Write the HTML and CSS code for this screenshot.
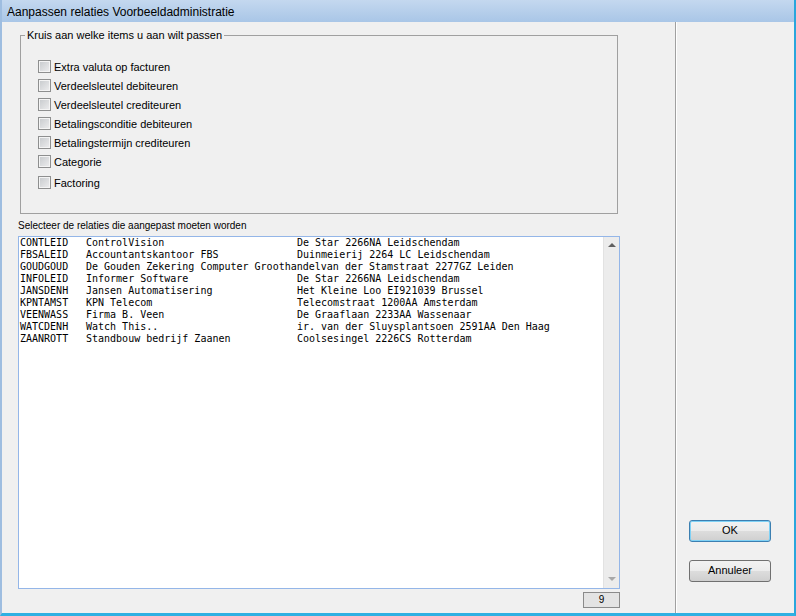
FILE: index.html
```html
<!DOCTYPE html>
<html lang="nl">

<head>
    <meta charset="UTF-8">
    <meta name="viewport" content="width=device-width, initial-scale=1.0">
    <title>Aanpassen relaties Voorbeeldadministratie</title>
    <link rel="stylesheet" href="styles.css">
</head>

<body>
    <div class="window">
        <div class="title-bar">Aanpassen relaties Voorbeeldadministratie</div>

        <div class="content">
            <div class="main-pane">
                <fieldset class="group">
                    <legend>Kruis aan welke items u aan wilt passen</legend>
                    <div class="options">
                        <label class="option"><input type="checkbox">Extra valuta op facturen</label>
                        <label class="option"><input type="checkbox">Verdeelsleutel debiteuren</label>
                        <label class="option"><input type="checkbox">Verdeelsleutel crediteuren</label>
                        <label class="option"><input type="checkbox">Betalingsconditie debiteuren</label>
                        <label class="option"><input type="checkbox">Betalingstermijn crediteuren</label>
                        <label class="option"><input type="checkbox">Categorie</label>
                        <label class="option option-last"><input type="checkbox">Factoring</label>
                    </div>
                </fieldset>

                <div class="list-label">Selecteer de relaties die aangepast moeten worden</div>

                <div class="list">
                    <div class="rows">
                        <div class="row"><span class="code">CONTLEID</span><span class="name">ControlVision</span><span>De Star 2266NA Leidschendam</span></div>
                        <div class="row"><span class="code">FBSALEID</span><span class="name">Accountantskantoor FBS</span><span>Duinmeierij 2264 LC Leidschendam</span></div>
                        <div class="row"><span class="code">GOUDGOUD</span><span class="name">De Gouden Zekering Computer Groothandel</span><span>van der Stamstraat 2277GZ Leiden</span></div>
                        <div class="row"><span class="code">INFOLEID</span><span class="name">Informer Software</span><span>De Star 2266NA Leidschendam</span></div>
                        <div class="row"><span class="code">JANSDENH</span><span class="name">Jansen Automatisering</span><span>Het Kleine Loo EI921039 Brussel</span></div>
                        <div class="row"><span class="code">KPNTAMST</span><span class="name">KPN Telecom</span><span>Telecomstraat 1200AA Amsterdam</span></div>
                        <div class="row"><span class="code">VEENWASS</span><span class="name">Firma B. Veen</span><span>De Graaflaan 2233AA Wassenaar</span></div>
                        <div class="row"><span class="code">WATCDENH</span><span class="name">Watch This..</span><span>ir. van der Sluysplantsoen 2591AA Den Haag</span></div>
                        <div class="row"><span class="code">ZAANROTT</span><span class="name">Standbouw bedrijf Zaanen</span><span>Coolsesingel 2226CS Rotterdam</span></div>
                    </div>
                    <div class="scrollbar">
                        <span class="arrow-up"></span>
                        <span class="arrow-down"></span>
                    </div>
                </div>

                <div class="list-footer">
                    <div class="count">9</div>
                </div>
            </div>

            <div class="divider"></div>

            <div class="side-pane">
                <button class="btn btn-default">OK</button>
                <button class="btn">Annuleer</button>
            </div>
        </div>
    </div>
</body>

</html>
```

FILE: styles.css
```css
* {
    box-sizing: border-box;
}

body {
    margin: 0;
    font-family: "Liberation Sans", Arial, sans-serif;
    font-size: 11px;
    color: #000;
}

.window {
    width: 796px;
    height: 616px;
    display: flex;
    flex-direction: column;
    background-color: #f0f0f0;
    border-left: 2px solid #9ebde0;
    border-right: 2px solid #2aa6dc;
    border-bottom: 3px solid #2fb0e2;
}

.title-bar {
    height: 22px;
    padding: 2px 0 0 5px;
    line-height: 20px;
    font-size: 12px;
    background: linear-gradient(#c4d8ef, #a9c6e7);
}

.content {
    flex: 1;
    display: flex;
}

.main-pane {
    width: 673px;
    padding-left: 16px;
}

.group {
    width: 598px;
    margin: 7px 0 0 2px;
    padding: 15px 0 21px 4px;
    border: 1px solid #a0a0a0;
}

.group legend {
    padding: 0 2px;
    line-height: 13px;
}

.options {
    padding-left: 13px;
}

.option {
    display: flex;
    align-items: center;
    height: 19px;
}

.option-last {
    margin-top: 2px;
}

.option input {
    appearance: none;
    width: 13px;
    height: 13px;
    margin: 0 3px 0 0;
    border: 1px solid #8e8f8f;
    background: linear-gradient(135deg, #c6c9cc, #eeeeef);
    box-shadow: inset 0 0 0 1px #f4f4f4;
}

.list-label {
    height: 12px;
    margin: 6px 0 4px;
    font-size: 10px;
    line-height: 12px;
}

.list {
    display: flex;
    width: 602px;
    height: 353px;
    background-color: #fff;
    border: 1px solid #94b6e8;
}

.rows {
    flex: 1;
    padding-left: 1px;
    font-family: "DejaVu Sans Mono", monospace;
    font-size: 10px;
    line-height: 12px;
    white-space: nowrap;
}

.row {
    display: flex;
}

.code {
    width: 66px;
    flex-shrink: 0;
}

.name {
    min-width: 211px;
    flex-shrink: 0;
}

.scrollbar {
    width: 16px;
    display: flex;
    flex-direction: column;
    justify-content: space-between;
    align-items: center;
    padding: 6px 0 7px;
    background-color: #ececec;
    border-left: 1px solid #e2e2e2;
}

.arrow-up,
.arrow-down {
    width: 0;
    height: 0;
    border-left: 4px solid transparent;
    border-right: 4px solid transparent;
}

.arrow-up {
    border-bottom: 4px solid #606060;
}

.arrow-down {
    border-top: 4px solid #a8a8a8;
}

.list-footer {
    width: 602px;
    display: flex;
    justify-content: flex-end;
    margin-top: 3px;
}

.count {
    width: 37px;
    height: 16px;
    padding-bottom: 1px;
    font-size: 10px;
    line-height: 14px;
    text-align: center;
    background-color: #e3e3e3;
    border: 1px solid #8a8a8a;
}

.divider {
    width: 2px;
    border-left: 1px solid #a0a0a0;
    border-right: 1px solid #fff;
}

.side-pane {
    flex: 1;
    display: flex;
    flex-direction: column;
    justify-content: flex-end;
    gap: 18px;
    padding: 0 0 31px 12px;
}

.btn {
    width: 82px;
    height: 22px;
    padding: 0 0 2px;
    font-family: "Liberation Sans", Arial, sans-serif;
    font-size: 11px;
    color: #000;
    border: 1px solid #707070;
    border-radius: 3px;
    background: linear-gradient(#f2f2f2 0%, #ebebeb 50%, #dddddd 50%, #cfcfcf 100%);
}

.btn-default {
    border-color: #3c7fb1;
    box-shadow: inset 0 0 0 1px #7fd1f5;
}
```
